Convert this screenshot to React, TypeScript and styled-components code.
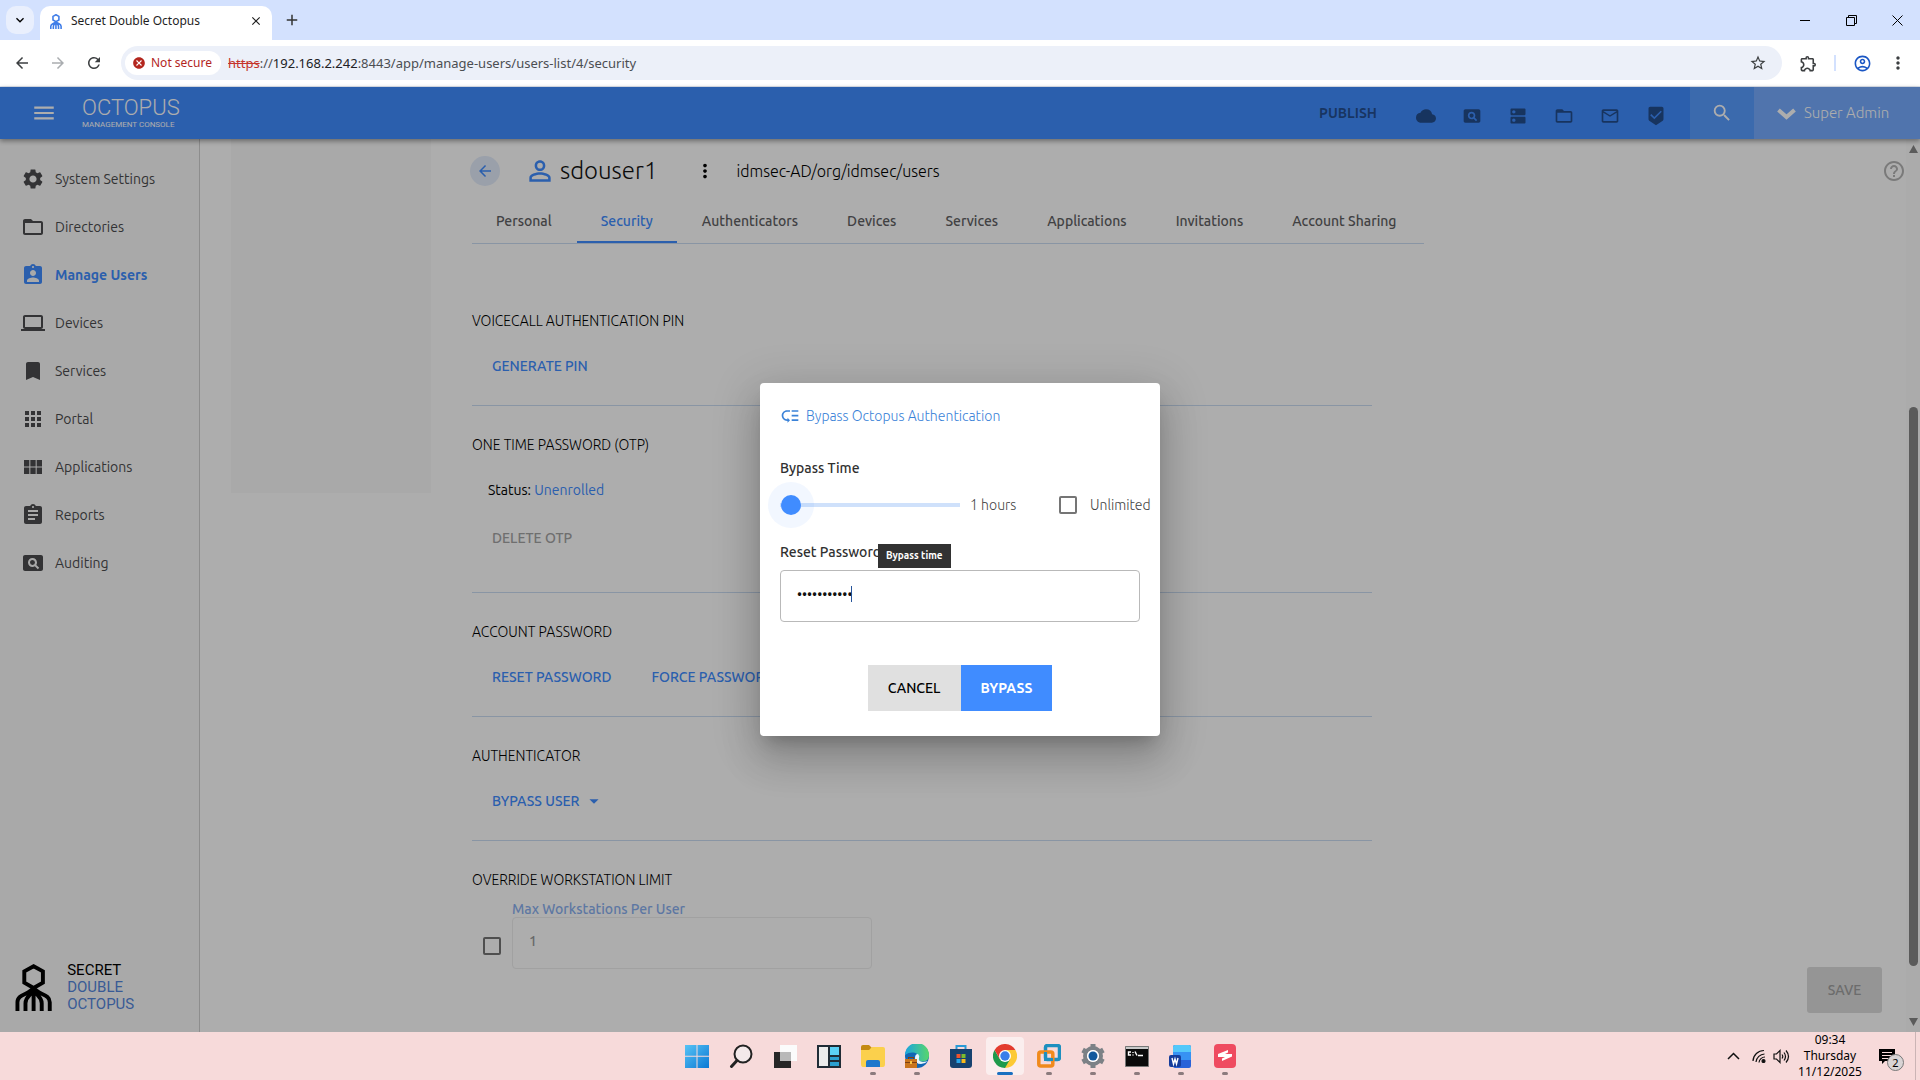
import React, { useState } from "react";
import styled, { createGlobalStyle, css } from "styled-components";
import {
  MdAdd, MdApps, MdArrowBack, MdArrowDropDown, MdArrowForward, MdAssignment, MdAssignmentInd,
  MdBeenhere, MdBookmark, MdCancel, MdClose, MdCloud, MdDns, MdExpandMore, MdFolderOpen,
  MdHelpOutline, MdLaptop, MdLowPriority, MdMailOutline, MdMenu, MdMoreVert, MdOutlineAccountCircle,
  MdOutlineExtension, MdPageview, MdPersonOutline, MdRefresh, MdSearch, MdSettings, MdStarBorder,
  MdViewModule,
} from "react-icons/md";

const ui = `Ubuntu, "Open Sans", "Noto Sans", sans-serif`;
const system = `"Segoe UI", "Noto Sans", "Open Sans", sans-serif`;
const condensed = `"Ubuntu Condensed", "Liberation Sans Narrow", Roboto, sans-serif`;
const blue = "#408cff";

const GlobalStyle = createGlobalStyle`
  * { box-sizing: border-box; }
  body { margin: 0; background: #fff; }
  button, input { font: inherit; }
  button { border: 0; padding: 0; background: none; cursor: pointer; color: inherit; }
  svg { display: block; flex: none; }
`;

const Screen = styled.div`
  display: flex;
  flex-direction: column;
  height: 100vh;
  overflow: hidden;
  font: 14px/22px ${ui};
  color: #000;
`;

/* ---------- browser window ---------- */

const TabStrip = styled.div`
  display: flex;
  align-items: flex-end;
  height: 40px;
  flex: none;
  padding-left: 6px;
  background: #d3e1fe;
  font: 12px/18px ${system};
`;

const TabSearch = styled.button`
  width: 28px;
  height: 28px;
  margin: 0 6px 6px 0;
  border-radius: 10px;
  background: #e9effd;
  display: grid;
  place-items: center;
`;

const BrowserTab = styled.div`
  display: flex;
  align-items: center;
  gap: 9px;
  width: 232px;
  height: 34px;
  padding: 0 9px 4px 10px;
  border-radius: 10px 10px 0 0;
  background: #fff;
  color: #1f1f1f;
`;

const TabTitle = styled.span`
  flex: 1;
  white-space: nowrap;
`;

const NewTab = styled.button`
  width: 28px;
  height: 28px;
  margin: 0 0 6px 6px;
  display: grid;
  place-items: center;
  color: #333;
`;

const WindowControls = styled.div`
  display: flex;
  margin-left: auto;
  align-self: stretch;
`;

const WindowButton = styled.button`
  width: 46px;
  display: grid;
  place-items: center;
`;

const Toolbar = styled.div`
  display: flex;
  align-items: center;
  height: 47px;
  flex: none;
  padding: 0 4px;
  background: #fff;
  border-bottom: 1px solid #dde3ec;
  color: #444746;
`;

const ToolButton = styled.button<{ $dim?: boolean }>`
  width: 36px;
  height: 34px;
  display: grid;
  place-items: center;
  color: ${(p) => (p.$dim ? "#aaadb0" : "#3c3f41")};
`;

const Omnibox = styled.div`
  display: flex;
  align-items: center;
  flex: 1;
  height: 34px;
  margin: 0 8px 0 9px;
  padding: 0 6px 0 4px;
  border-radius: 17px;
  background: #ecf0f9;
  font: 14px/20px ${system};
`;

const InsecureChip = styled.button`
  display: flex;
  align-items: center;
  gap: 5px;
  height: 24px;
  padding: 0 9px 0 7px;
  margin-right: 7px;
  border-radius: 12px;
  background: #fff;
  color: #b3261e;
  font: 12px/18px ${system};
`;

const Address = styled.span`
  flex: 1;
  color: #4b4e52;
  font-size: 13px;
  b { font-weight: 400; color: #202124; }
  s { color: #c5342c; }
`;

const ToolDivider = styled.span`
  width: 2px;
  height: 16px;
  margin: 0 8px;
  background: #d3e1fe;
`;

/* ---------- application ---------- */

const AppArea = styled.div`
  position: relative;
  flex: 1;
  min-height: 0;
  display: flex;
  flex-direction: column;
  background: #fff;
`;

const Header = styled.header`
  display: flex;
  align-items: stretch;
  height: 52px;
  flex: none;
  background: ${blue};
  box-shadow: 0 2px 5px rgba(0, 0, 0, 0.4);
  z-index: 1;
`;

const MenuButton = styled.button`
  width: 36px;
  margin: 0 12px 0 26px;
  display: grid;
  place-items: center;
  color: #fff;
`;

const Brand = styled.div`
  display: flex;
  flex-direction: column;
  justify-content: center;
  padding-left: 8px;
  color: #fff;
  white-space: nowrap;
`;

const BrandName = styled.span`
  font: 300 22px/24px ${condensed};
`;

const BrandSub = styled.span`
  font: 8px/10px Roboto, sans-serif;
`;

const HeaderTools = styled.div`
  display: flex;
  align-items: center;
  margin-left: auto;
  padding-right: 11px;
  color: rgba(0, 0, 0, 0.45);
`;

const Publish = styled.button`
  margin-right: 26px;
  font-weight: 600;
`;

const HeaderIcon = styled.button`
  width: 46px;
  height: 46px;
  padding-top: 6px;
  display: grid;
  place-items: center;
`;

const HeaderSearch = styled.button`
  width: 64px;
  display: grid;
  place-items: center;
  background: #589cff;
  color: #fff;
`;

const Account = styled.button`
  display: flex;
  align-items: center;
  gap: 8px;
  width: 166px;
  padding-left: 23px;
  background: #76acff;
  color: #fff;
  font-size: 15px;
  font-weight: 300;
`;

const Body = styled.div`
  display: flex;
  flex: 1;
  min-height: 0;
`;

const Sidebar = styled.nav`
  display: flex;
  flex-direction: column;
  width: 200px;
  flex: none;
  padding: 16px 0 19px;
  background: #fafafa;
  border-right: 1px solid #d0d0d0;
`;

const NavLink = styled.a<{ $active?: boolean }>`
  display: flex;
  align-items: center;
  gap: 10px;
  height: 48px;
  padding-left: 21px;
  color: ${(p) => (p.$active ? blue : "#4c4c4e")};
  font-weight: ${(p) => (p.$active ? 700 : 400)};
  text-decoration: none;
  white-space: nowrap;
`;

const Company = styled.div`
  display: flex;
  align-items: center;
  gap: 15px;
  margin-top: auto;
  padding-left: 15px;
`;

const CompanyName = styled.div`
  display: flex;
  flex-direction: column;
  font: 15px/17px ${condensed};
  color: #5587dc;
  b { font-weight: 400; color: #000; }
`;

const Main = styled.main`
  display: flex;
  flex: 1;
  min-width: 0;
  padding-left: 31px;
`;

const SidePanel = styled.div`
  width: 200px;
  height: 354px;
  flex: none;
  background: #f9f9f9;
`;

const Content = styled.div`
  width: 952px;
  flex: none;
  margin-left: 41px;
  padding-top: 14px;
`;

const UserRow = styled.div`
  display: flex;
  align-items: center;
  height: 36px;
  padding-right: 20px;
`;

const BackButton = styled.button`
  width: 30px;
  height: 30px;
  margin: 0 24px 0 -2px;
  border-radius: 50%;
  display: grid;
  place-items: center;
  background: #e3ecfb;
  color: ${blue};
`;

const UserName = styled.h1`
  margin: 0 37px 0 4px;
  font-size: 24px;
  line-height: 36px;
  font-weight: 300;
  color: #111;
`;

const UserPath = styled.span`
  margin-left: 20px;
  font-size: 16px;
  font-weight: 300;
`;

const Tabs = styled.div`
  display: flex;
  gap: 1px;
  height: 55px;
  padding-top: 10px;
  border-bottom: 1px solid #cbdcf2;
`;

const TabButton = styled.button<{ $active?: boolean }>`
  padding: 0 24px;
  font-weight: 500;
  color: ${(p) => (p.$active ? blue : "#616163")};
  box-shadow: ${(p) => (p.$active ? `inset 0 -2px ${blue}` : "none")};
`;

const Sections = styled.div`
  width: 900px;
  padding-top: 38px;
`;

const Section = styled.section<{ $open?: boolean }>`
  padding: 28px 0 21px;
  border-bottom: 1px solid ${(p) => (p.$open ? "transparent" : "#cbdcf2")};
`;

const SectionTitle = styled.h2<{ $tight?: boolean }>`
  margin: 0 0 ${(p) => (p.$tight ? 10 : 16)}px;
  font-size: 14px;
  line-height: 22px;
  font-weight: 300;
`;

const ActionRow = styled.div`
  display: flex;
  white-space: nowrap;
`;

const Action = styled.button`
  display: flex;
  align-items: center;
  gap: 3px;
  height: 36px;
  padding: 0 20px;
  font-weight: 500;
  color: ${blue};
  &:disabled { color: #a4a4a4; }
`;

const Status = styled.p`
  margin: 0 0 12px;
  padding-left: 16px;
  line-height: 36px;
  span { color: ${blue}; }
`;

const Spacer = styled.div`
  height: 15px;
`;

const LimitRow = styled.div`
  display: flex;
  padding-left: 11px;
  gap: 11px;
`;

const CheckBox = styled.input`
  appearance: none;
  width: 18px;
  height: 18px;
  margin: 0;
  flex: none;
  border: 2px solid #757575;
  border-radius: 2px;
`;

const LimitCheck = styled(CheckBox)`
  margin-top: 36px;
`;

const LimitField = styled.label`
  display: flex;
  flex-direction: column;
  line-height: 16px;
  color: #8ab0f0;
  font-weight: 500;
`;

const inputBox = css`
  width: 360px;
  height: 52px;
  border-radius: 4px;
  background: none;
`;

const LimitInput = styled.input`
  ${inputBox}
  padding: 0 16px 4px;
  border: 1px solid #ededed;
  color: #999;
`;

const MainEnd = styled.div`
  display: flex;
  flex: 1;
  flex-direction: column;
  justify-content: space-between;
  align-items: flex-end;
  padding: 20px 0 19px;
`;

const HelpButton = styled.button`
  color: #b4b4b4;
`;

const SaveButton = styled.button`
  width: 75px;
  height: 46px;
  margin-right: 24px;
  border-radius: 3px;
  background: #dcdcdc;
  font-weight: 500;
  &:disabled { color: #a0a0a0; }
`;

const ScrollBar = styled.div`
  display: flex;
  flex-direction: column;
  align-items: center;
  justify-content: space-between;
  width: 14px;
  padding: 6px 0;
  background: #fcfcfc;
  color: #868686;
`;

const ScrollThumb = styled.div`
  width: 9px;
  height: 559px;
  margin: auto 0 52px;
  border-radius: 5px;
  background: #868686;
`;

/* ---------- dialog ---------- */

const Backdrop = styled.div`
  position: absolute;
  inset: 0;
  z-index: 2;
  display: grid;
  place-items: center;
  background: rgba(0, 0, 0, 0.32);
`;

const Dialog = styled.form`
  position: relative;
  width: 400px;
  padding: 20px 20px 25px;
  border-radius: 4px;
  background: #fff;
  box-shadow: 0 11px 15px -7px rgba(0, 0, 0, 0.2), 0 24px 38px 3px rgba(0, 0, 0, 0.14), 0 9px 46px 8px rgba(0, 0, 0, 0.12);
  color: #303030;
`;

const DialogTitle = styled.h2`
  display: flex;
  align-items: center;
  gap: 6px;
  margin: 0 0 28px;
  font-size: 14px;
  line-height: 26px;
  font-weight: 300;
  color: #3a82d8;
`;

const FieldLabel = styled.label`
  display: block;
  font-weight: 500;
  line-height: 22px;
`;

const TimeRow = styled.div`
  display: grid;
  grid-template-columns: 180px 79px auto;
  column-gap: 10px;
  align-items: center;
  height: 52px;
  margin-bottom: 10px;
  white-space: nowrap;
  color: #444;
  font-weight: 300;
`;

const Slider = styled.input`
  appearance: none;
  width: 180px;
  height: 20px;
  margin: 0;
  background: linear-gradient(#cfe1fb, #cfe1fb) center / 100% 4px no-repeat;
  &::-webkit-slider-thumb {
    appearance: none;
    width: 20px;
    height: 20px;
    border-radius: 50%;
    background: ${blue};
    box-shadow: 0 0 0 13px rgba(64, 140, 255, 0.07);
  }
`;

const Unlimited = styled.label`
  display: flex;
  align-items: center;
  gap: 13px;
`;

const PasswordBox = styled.div`
  position: relative;
  margin: 7px 0 43px;
`;

const PasswordInput = styled.input`
  ${inputBox}
  display: block;
  padding: 0 16px 4px;
  border: 1px solid #b9b9b9;
  color: #111;
  outline: 0;
`;

const Caret = styled.span`
  position: absolute;
  left: 71px;
  top: 16px;
  width: 1px;
  height: 16px;
  background: #26549b;
`;

const Tooltip = styled.div`
  position: absolute;
  left: 118px;
  top: 161px;
  padding: 0 8px;
  background: #323232;
  color: #fff;
  font-size: 10px;
  line-height: 24px;
  font-weight: 600;
`;

const DialogActions = styled.div`
  display: flex;
  justify-content: center;
`;

const DialogButton = styled.button<{ $primary?: boolean }>`
  height: 46px;
  padding: 0 20px;
  background: ${(p) => (p.$primary ? blue : "#e0e0e0")};
  color: ${(p) => (p.$primary ? "#fff" : "#000")};
  font-weight: ${(p) => (p.$primary ? 600 : 500)};
`;

/* ---------- task bar ---------- */

const Taskbar = styled.footer`
  display: grid;
  grid-template-columns: 1fr auto 1fr;
  align-items: center;
  height: 48px;
  flex: none;
  background: #f7dada;
`;

const Apps = styled.div`
  display: flex;
  grid-column: 2;
  gap: 6px;
  padding-left: 2px;
`;

const AppButton = styled.button<{ $open?: boolean; $current?: boolean }>`
  display: flex;
  flex-direction: column;
  align-items: center;
  justify-content: space-between;
  width: 38px;
  height: 38px;
  padding-top: 7px;
  border-radius: 4px;
  background: ${(p) => (p.$current ? "#fbeeee" : "none")};
  &::after {
    content: "";
    width: ${(p) => (p.$current ? 16 : 6)}px;
    height: 3px;
    border-radius: 2px;
    background: ${(p) => (p.$current ? "#1a6fc0" : p.$open ? "#8b7b7d" : "transparent")};
  }
`;

const Tray = styled.div`
  display: flex;
  justify-content: flex-end;
  align-items: center;
  gap: 7px;
  padding-right: 4px;
  font: 12px/16px ${system};
`;

const TrayMore = styled.button`
  margin-right: 5px;
`;

const Clock = styled.time`
  width: 66px;
  margin-right: 9px;
  text-align: center;
`;

const Notice = styled.button`
  position: relative;
  width: 20px;
  height: 16px;
  margin-right: 9px;
`;

const Badge = styled.span`
  position: absolute;
  left: 8px;
  top: 6px;
  width: 17px;
  height: 17px;
  border: 1px solid #777;
  border-radius: 50%;
  background: #d9d4d5;
  font-size: 11px;
  line-height: 15px;
`;

const ShowDesktop = styled.button`
  width: 1px;
  height: 48px;
  background: #cbb4b5;
`;

/* ---------- drawings ---------- */

const Octopus = ({ size, color, w = 4 }: { size: number; color: string; w?: number }) => (
  <svg width={(size * 38) / 48} height={size} viewBox="0 0 38 48" fill="none" stroke={color} strokeWidth={w}>
    <path d="M19 2.300 28.500 7.500V19L19 24.500 9.500 19V7.500Z" />
    <path d="M19 24C15 32 2.500 30 2.500 39V48M19 24C23 32 35.500 30 35.500 39V48M19 25C18 32 10.700 32 10.700 40V48M19 25C20 32 27.300 32 27.300 40V48M19 24V48" />
  </svg>
);

const Svg = ({ children, s = 24 }: { children: React.ReactNode; s?: number }) => (
  <svg width={s} height={s} viewBox="0 0 24 24">{children}</svg>
);

const taskApps = [
  {
    name: "Start",
    icon: (
      <Svg>
        <defs>
          <linearGradient id="win" x1="0" y1="0" x2="1" y2="1"><stop stopColor="#57c3f5" /><stop offset="1" stopColor="#0a78d4" /></linearGradient>
        </defs>
        <path fill="url(#win)" d="M0 1H11.500V11.800H0ZM12.500 1H24V11.800H12.500ZM0 12.800H11.500V24H0ZM12.500 12.800H24V24H12.500Z" />
      </Svg>
    ),
  },
  {
    name: "Search",
    icon: (
      <Svg>
        <circle cx="14" cy="10" r="8.500" fill="#f3e9ea" stroke="#222" strokeWidth="2" />
        <path d="M8 16.500 2.500 22.500" stroke="#222" strokeWidth="3" strokeLinecap="round" />
      </Svg>
    ),
  },
  {
    name: "Task View",
    icon: (
      <Svg>
        <path fill="#fbfbfb" d="M7 1H24V17H7Z" />
        <path fill="#262626" d="M1 8H18V24H1Z" />
        <path fill="#b9b9b9" d="M7 8H18V17H7Z" />
      </Svg>
    ),
  },
  {
    name: "Widgets",
    icon: (
      <Svg>
        <path fill="#202c36" d="M0 1H24V24H0Z" />
        <path fill="#ececec" d="M2 3H11V22H2Z" />
        <path fill="#5bd0f5" d="M13 3H22V11H13Z" />
        <path fill="#2a9fd0" d="M13 13H22V16H13ZM13 18H22V22H13Z" />
      </Svg>
    ),
  },
  {
    name: "File Explorer",
    open: true,
    icon: (
      <Svg>
        <path fill="#c48a12" d="M0 3Q0 1 2 1H8L11 4V7H0Z" />
        <path fill="#fbd04c" d="M0 6H8L11 3H22Q24 3 24 5V20Q24 23 22 23H2Q0 23 0 20Z" />
        <path fill="#1f78cc" d="M5 18Q5 16 7 16H17Q19 16 19 18V23H5Z" />
      </Svg>
    ),
  },
  {
    name: "Edge",
    open: true,
    icon: (
      <Svg>
        <defs>
          <linearGradient id="edge"><stop stopColor="#1ba4e0" /><stop offset="1" stopColor="#58d66b" /></linearGradient>
        </defs>
        <circle cx="12" cy="12" r="12" fill="#1166b4" />
        <path fill="url(#edge)" d="M0 11A12 12 0 0 1 24 11C24 16 21 17.500 17 17.500 13 17.500 14 15 14 13 14 9 6 6 0 11Z" />
        <path fill="#e9f5fb" d="M10 14Q10 10 13 10 15 12 14 14 13 17.500 18 18 22 17.500 23 17 20 20 16 20 10 20 10 14Z" />
        <path fill="#c9741d" d="M0 15H12V24H0Z" />
        <path fill="#7c3f10" d="M3 13H9V15H8V14H4V15H3ZM0 18H12V19H0Z" />
        <path fill="#f5c445" d="M5 17H7V20H5Z" />
      </Svg>
    ),
  },
  {
    name: "Store",
    icon: (
      <Svg>
        <path d="M7.500 6V2H16.500V6" fill="none" stroke="#2a9ad6" strokeWidth="2" />
        <path fill="#17426f" d="M1 5H23V21Q23 24 20 24H4Q1 24 1 21Z" />
        <path fill="#f0532d" d="M7.500 10H11.500V14H7.500Z" />
        <path fill="#7dbb2d" d="M12.500 10H16.500V14H12.500Z" />
        <path fill="#2aa5e8" d="M7.500 15H11.500V19H7.500Z" />
        <path fill="#f9b91b" d="M12.500 15H16.500V19H12.500Z" />
      </Svg>
    ),
  },
  {
    name: "Chrome",
    open: true,
    current: true,
    icon: (
      <Svg>
        <path fill="#e33b2e" d="M12 12 1.600 6A12 12 0 0 1 22.400 6Z" />
        <path fill="#fcc934" d="M12 12V6H22.400A12 12 0 0 1 12 24Z" />
        <path fill="#1e9a4b" d="M1.600 6A12 12 0 0 0 12 24L17.200 15 12 12 6.800 15Z" />
        <path fill="#e33b2e" d="M1.600 6 6.800 15 12 6Z" />
        <circle cx="12" cy="12" r="6" fill="#fff" />
        <circle cx="12" cy="12" r="4.700" fill="#3a7eea" />
      </Svg>
    ),
  },
  {
    name: "VMware",
    open: true,
    icon: (
      <Svg>
        <rect x="8.500" y="1.500" width="14" height="14" rx="2" fill="none" stroke="#1d8fbf" strokeWidth="3.500" />
        <rect x="1.800" y="8" width="14" height="14" rx="2" fill="none" stroke="#f08a1c" strokeWidth="3.500" />
        <path d="M8.500 8V15.500H16" fill="none" stroke="#1d8fbf" strokeWidth="3" />
      </Svg>
    ),
  },
  {
    name: "Settings",
    open: true,
    icon: (
      <Svg>
        <circle cx="12" cy="12" r="8" fill="none" stroke="#7c8186" strokeWidth="4" />
        <path d="M12 0V5M12 19V24M1.600 6 6 8.500M18 15.500 22.400 18M1.600 18 6 15.500M18 8.500 22.400 6" stroke="#7c8186" strokeWidth="5" />
        <circle cx="12" cy="12" r="6" fill="#fff" />
        <circle cx="12" cy="12" r="4.500" fill="#12589c" />
      </Svg>
    ),
  },
  {
    name: "Command Prompt",
    open: true,
    icon: (
      <Svg>
        <path fill="#0b0b0b" stroke="#777" d="M.500 2.500H23.500V22.500H.500Z" />
        <path fill="#c9c9c9" d="M1 3H23V5H1Z" />
        <path stroke="#fff" strokeWidth="1.400" fill="none" d="M6 8H3.500V11H6M8 8V9M8 10.500V11.500M10 7.500 12 11.500M13 11.500H18" />
      </Svg>
    ),
  },
  {
    name: "Word",
    open: true,
    icon: (
      <Svg>
        <path fill="#2a62d8" d="M4 3Q4 1 6 1H20Q22 1 22 3V22Q22 24 20 24H6Q4 24 4 22Z" />
        <path fill="#54c8fa" d="M4 9V3Q4 1 6 1H20Q22 1 22 3V9Z" />
        <path fill="#3792f3" d="M4 8H22V16H4Z" />
        <rect x="0" y="11" width="12" height="12" rx="2" fill="#163d9c" />
        <path d="M3 14 4.500 20 6 15 7.500 20 9 14" fill="none" stroke="#fff" strokeWidth="1.400" />
      </Svg>
    ),
  },
  {
    name: "Remote",
    open: true,
    icon: (
      <Svg>
        <rect x="1" y="0" width="22" height="24" rx="4" fill="#ef4b60" />
        <path d="M5 10 15 6V8.500L12 10H19V12.500L9 17V14.500L12 13H5Z" fill="#fff" />
      </Svg>
    ),
  },
];

const navItems = [
  ["System Settings", MdSettings],
  ["Directories", MdFolderOpen],
  ["Manage Users", MdAssignmentInd],
  ["Devices", MdLaptop],
  ["Services", MdBookmark],
  ["Portal", MdApps],
  ["Applications", MdViewModule],
  ["Reports", MdAssignment],
  ["Auditing", MdPageview],
] as const;

const headerIcons = [
  ["Cloud", MdCloud],
  ["Auditing", MdPageview],
  ["Servers", MdDns],
  ["Directories", MdFolderOpen],
  ["Mail", MdMailOutline],
  ["Protection", MdBeenhere],
] as const;

const tabs = ["Personal", "Security", "Authenticators", "Devices", "Services", "Applications", "Invitations", "Account Sharing"];

function BrowserChrome() {
  return (
    <>
      <TabStrip>
        <TabSearch aria-label="Search tabs"><MdExpandMore size={16} /></TabSearch>
        <BrowserTab>
          <Octopus size={15} color="#3f7de8" w={5} />
          <TabTitle>Secret Double Octopus</TabTitle>
          <button aria-label="Close tab"><MdClose size={14} /></button>
        </BrowserTab>
        <NewTab aria-label="New tab"><MdAdd size={18} /></NewTab>
        <WindowControls>
          <WindowButton aria-label="Minimize">
            <svg width="10" height="10" stroke="#000"><path d="M0 5.500H10" /></svg>
          </WindowButton>
          <WindowButton aria-label="Restore">
            <svg width="11" height="11" fill="none" stroke="#000"><path d="M.5 2.500H8.500V10.500H.500ZM2.500 2.500V.500H10.500V8.500H8.500" /></svg>
          </WindowButton>
          <WindowButton aria-label="Close">
            <svg width="11" height="11" stroke="#000"><path d="M.5.5 10.500 10.500M10.500.500.500 10.500" /></svg>
          </WindowButton>
        </WindowControls>
      </TabStrip>
      <Toolbar>
        <ToolButton aria-label="Back"><MdArrowBack size={18} /></ToolButton>
        <ToolButton aria-label="Forward" $dim><MdArrowForward size={18} /></ToolButton>
        <ToolButton aria-label="Reload"><MdRefresh size={18} /></ToolButton>
        <Omnibox>
          <InsecureChip><MdCancel size={14} />Not secure</InsecureChip>
          <Address><s>https</s>://<b>192.168.2.242</b>:8443/app/manage-users/users-list/4/security</Address>
          <ToolButton aria-label="Bookmark"><MdStarBorder size={18} /></ToolButton>
        </Omnibox>
        <ToolButton aria-label="Extensions"><MdOutlineExtension size={19} /></ToolButton>
        <ToolDivider />
        <ToolButton aria-label="Profile"><MdOutlineAccountCircle size={19} color="#1a56c4" /></ToolButton>
        <ToolButton aria-label="Menu"><MdMoreVert size={20} /></ToolButton>
      </Toolbar>
    </>
  );
}

function BypassDialog() {
  const [hours, setHours] = useState(1);
  const [password, setPassword] = useState("Octopus1234");
  return (
    <Dialog role="dialog" aria-labelledby="bypass-title" onSubmit={(e) => e.preventDefault()}>
      <DialogTitle id="bypass-title"><MdLowPriority size={20} />Bypass Octopus Authentication</DialogTitle>
      <FieldLabel htmlFor="bypass-time">Bypass Time</FieldLabel>
      <TimeRow>
        <Slider id="bypass-time" type="range" min={0} max={168} value={hours} onChange={(e) => setHours(Number(e.target.value))} />
        <span>{hours} hours</span>
        <Unlimited><CheckBox type="checkbox" />Unlimited</Unlimited>
      </TimeRow>
      <FieldLabel htmlFor="reset-password">Reset Password</FieldLabel>
      <PasswordBox>
        <PasswordInput id="reset-password" type="password" value={password} onChange={(e) => setPassword(e.target.value)} />
        <Caret />
      </PasswordBox>
      <DialogActions>
        <DialogButton type="button">CANCEL</DialogButton>
        <DialogButton type="submit" $primary>BYPASS</DialogButton>
      </DialogActions>
      <Tooltip role="tooltip">Bypass time</Tooltip>
    </Dialog>
  );
}

export default function App() {
  return (
    <Screen>
      <GlobalStyle />
      <BrowserChrome />
      <AppArea>
        <Header>
          <MenuButton aria-label="Menu"><MdMenu size={26} /></MenuButton>
          <Brand>
            <BrandName>OCTOPUS</BrandName>
            <BrandSub>MANAGEMENT CONSOLE</BrandSub>
          </Brand>
          <HeaderTools>
            <Publish>PUBLISH</Publish>
            {headerIcons.map(([name, Icon]) => (
              <HeaderIcon key={name} aria-label={name}><Icon size={20} /></HeaderIcon>
            ))}
          </HeaderTools>
          <HeaderSearch aria-label="Search"><MdSearch size={22} stroke="currentColor" /></HeaderSearch>
          <Account>
            <svg width="19" height="13" viewBox="0 0 19 13" fill="none" stroke="#fff" strokeWidth="4"><path d="M1.500 3 9.500 10 17.500 3" /></svg>
            Super Admin
          </Account>
        </Header>
        <Body>
          <Sidebar>
            {navItems.map(([name, Icon]) => (
              <NavLink key={name} href="#" $active={name === "Manage Users"}>
                <Icon size={24} />{name}
              </NavLink>
            ))}
            <Company>
              <Octopus size={47} color="#000" />
              <CompanyName><b>SECRET</b><span>DOUBLE</span><span>OCTOPUS</span></CompanyName>
            </Company>
          </Sidebar>
          <Main>
            <SidePanel />
            <Content>
              <UserRow>
                <BackButton aria-label="Back"><MdArrowBack size={18} /></BackButton>
                <MdPersonOutline size={32} color={blue} />
                <UserName>sdouser1</UserName>
                <button aria-label="User actions"><MdMoreVert size={22} /></button>
                <UserPath>idmsec-AD/org/idmsec/users</UserPath>
              </UserRow>
              <Tabs role="tablist">
                {tabs.map((t) => (
                  <TabButton key={t} role="tab" $active={t === "Security"}>{t}</TabButton>
                ))}
              </Tabs>
              <Sections>
                <Section>
                  <SectionTitle>VOICECALL AUTHENTICATION PIN</SectionTitle>
                  <ActionRow><Action>GENERATE PIN</Action></ActionRow>
                </Section>
                <Section>
                  <SectionTitle>ONE TIME PASSWORD (OTP)</SectionTitle>
                  <Status>Status: <span>Unenrolled</span></Status>
                  <ActionRow><Action disabled>DELETE OTP</Action></ActionRow>
                  <Spacer />
                </Section>
                <Section>
                  <SectionTitle>ACCOUNT PASSWORD</SectionTitle>
                  <ActionRow>
                    <Action>RESET PASSWORD</Action>
                    <Action>FORCE PASSWORD CHANGE</Action>
                  </ActionRow>
                </Section>
                <Section>
                  <SectionTitle>AUTHENTICATOR</SectionTitle>
                  <ActionRow><Action>BYPASS USER <MdArrowDropDown size={22} /></Action></ActionRow>
                </Section>
                <Section $open>
                  <SectionTitle $tight>OVERRIDE WORKSTATION LIMIT</SectionTitle>
                  <LimitRow>
                    <LimitCheck type="checkbox" aria-label="Override workstation limit" />
                    <LimitField>
                      Max Workstations Per User
                      <LimitInput defaultValue="1" disabled />
                    </LimitField>
                  </LimitRow>
                </Section>
              </Sections>
            </Content>
            <MainEnd>
              <HelpButton aria-label="Help"><MdHelpOutline size={24} /></HelpButton>
              <SaveButton disabled>SAVE</SaveButton>
            </MainEnd>
            <ScrollBar>
              <svg width="9" height="8" fill="currentColor"><path d="M4.500 0 9 8H0Z" /></svg>
              <ScrollThumb />
              <svg width="9" height="8" fill="currentColor"><path d="M4.500 8 9 0H0Z" /></svg>
            </ScrollBar>
          </Main>
        </Body>
        <Backdrop><BypassDialog /></Backdrop>
      </AppArea>
      <Taskbar>
        <Apps>
          {taskApps.map((a) => (
            <AppButton key={a.name} aria-label={a.name} $open={a.open} $current={a.current}>{a.icon}</AppButton>
          ))}
        </Apps>
        <Tray>
          <TrayMore aria-label="Show hidden icons">
            <svg width="13" height="8" fill="none" stroke="#111" strokeWidth="1.500"><path d="M1 7 6.500 1.500 12 7" /></svg>
          </TrayMore>
          <svg width="14" height="14" fill="none" stroke="#111" strokeWidth="1.200">
            <path d="M1 12A11 11 0 0 1 12 1.500M4 13A9 9 0 0 1 12.500 5M7 13.500A6 6 0 0 1 13 8" />
            <circle cx="11.500" cy="12" r="1.500" fill="#111" />
          </svg>
          <svg width="17" height="15" fill="none" stroke="#111" strokeWidth="1.200">
            <path d="M1 5H3.500L7 1.500V13.500L3.500 10H1ZM9 5.500Q10.500 7.500 9 9.500M11 3.500Q14 7.500 11 11.500M13 1.500Q18 7.500 13 13.500" />
          </svg>
          <Clock>09:34<br />Thursday<br />11/12/2025</Clock>
          <Notice aria-label="Notifications">
            <svg width="16" height="15"><path d="M0 0H16V12H6L3 15V12H0Z" fill="#000" /><path d="M3 3.500H13M3 6.500H13M3 9.500H9" stroke="#f7dada" /></svg>
            <Badge>2</Badge>
          </Notice>
          <ShowDesktop aria-label="Show desktop" />
        </Tray>
      </Taskbar>
    </Screen>
  );
}
